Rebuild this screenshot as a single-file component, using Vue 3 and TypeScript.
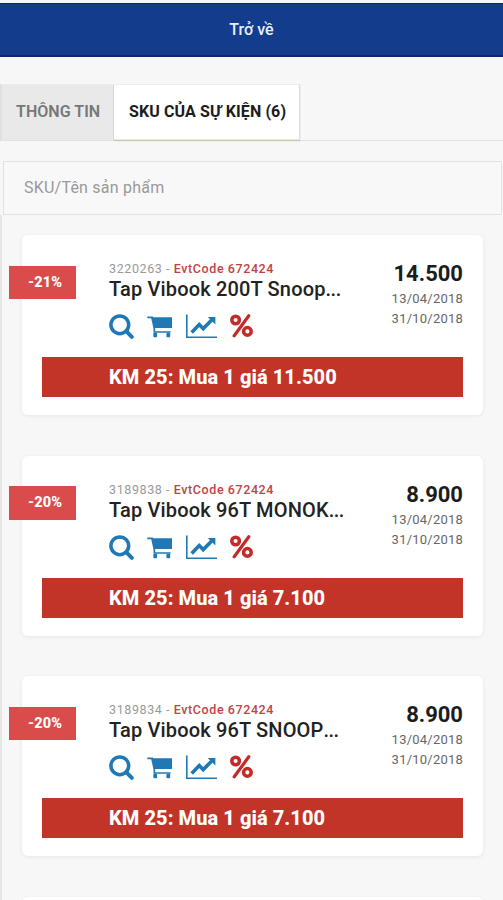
<script setup lang="ts">
interface Product {
  sku: string
  eventCode: string
  name: string
  discount: string
  price: string
  from: string
  to: string
  promo: string
}

const products: Product[] = [
  { sku: '3220263', eventCode: '672424', name: 'Tap Vibook 200T Snoop', discount: '-21%', price: '14.500', from: '13/04/2018', to: '31/10/2018', promo: 'KM 25: Mua 1 giá 11.500' },
  { sku: '3189838', eventCode: '672424', name: 'Tap Vibook 96T MONOK', discount: '-20%', price: '8.900', from: '13/04/2018', to: '31/10/2018', promo: 'KM 25: Mua 1 giá 7.100' },
  { sku: '3189834', eventCode: '672424', name: 'Tap Vibook 96T SNOOP', discount: '-20%', price: '8.900', from: '13/04/2018', to: '31/10/2018', promo: 'KM 25: Mua 1 giá 7.100' },
]
</script>

<template>
  <div class="screen">
    <header class="topbar">Trở về</header>
    <main class="content">
      <nav class="tabs">
        <div class="tab">THÔNG TIN</div>
        <div class="tab active">SKU CỦA SỰ KIỆN (6)</div>
      </nav>
      <input class="search" type="text" placeholder="SKU/Tên sản phẩm" />
      <section class="list">
        <article v-for="p in products" :key="p.sku" class="card">
          <span class="badge">{{ p.discount }}</span>
          <div class="row">
            <div class="info">
              <div class="code">{{ p.sku }} - <b>EvtCode {{ p.eventCode }}</b></div>
              <div class="name">{{ p.name }}<span class="dots">...</span></div>
              <div class="icons">
                <svg class="search-icon" viewBox="0 0 25 25" fill="none" stroke="#2079b5">
                  <circle cx="10.8" cy="10.8" r="8.9" stroke-width="3.5" />
                  <path d="M17.2 17.2L22.8 22.8" stroke-width="4" stroke-linecap="round" />
                </svg>
                <svg class="cart-icon" viewBox="0 0 26 22" fill="#2079b5">
                  <path d="M.3 .6H5.8L6.2 1.2H25V12H8.2V15.2H23.6V16.8H6.5V12.6L4.2 2.2H.3Z" />
                  <rect x="6.3" y="16.8" width="3.8" height="4.5" rx="1" />
                  <rect x="19.4" y="16.8" width="3.8" height="4.5" rx="1" />
                </svg>
                <svg class="chart-icon" viewBox="0 0 31 25">
                  <path d="M.8 .5V23.2H31" fill="none" stroke="#2079b5" stroke-width="1.6" />
                  <path d="M5.7 18.5L13.2 10.6L17.2 14.6L26 5.8" fill="none" stroke="#2079b5" stroke-width="3.6" />
                  <path d="M21.7 2.9H29.4V10.6Z" fill="#2079b5" />
                </svg>
                <svg class="percent-icon" viewBox="0 0 23 24" fill="none" stroke="#c42b28">
                  <circle cx="5.6" cy="6" r="3.8" stroke-width="3.5" />
                  <circle cx="17.4" cy="17.4" r="3.8" stroke-width="3.5" />
                  <path d="M18.8 1.8L4.2 21.8" stroke-width="3.2" stroke-linecap="round" />
                </svg>
              </div>
            </div>
            <div class="side">
              <div class="price">{{ p.price }}</div>
              <div class="date">{{ p.from }}</div>
              <div class="date">{{ p.to }}</div>
            </div>
          </div>
          <div class="promo">{{ p.promo }}</div>
        </article>
        <article class="card"></article>
      </section>
    </main>
  </div>
</template>

<style>
body {
  background: #f7f7f7;
  overflow: hidden;
}
</style>

<style scoped>
.screen {
  box-sizing: border-box;
  height: 900px;
  overflow: hidden;
  padding-top: 3px;
  background: #f7f7f7;
  font-family: Roboto, "Noto Sans", sans-serif;
}
.topbar {
  box-sizing: border-box;
  height: 54px;
  border-top: 1px solid #082774;
  border-bottom: 2px solid #082774;
  background: #143c8c;
  color: #e8effc;
  font-size: 16px;
  font-weight: 500;
  line-height: 51px;
  text-align: center;
}
.content {
  height: 843px;
  box-sizing: border-box;
  padding-top: 27px;
}
.tabs {
  display: flex;
  box-sizing: border-box;
  height: 57px;
  border-bottom: 1px solid #e2e2e2;
}
.tab {
  box-sizing: border-box;
  width: 114px;
  height: 56px;
  padding-left: 14px;
  border-right: 1px solid #dcdcdc;
  border-top: 1px solid #ececec;
  border-left: 2px solid #e0e0e0;
  background: #e9e9e9;
  color: #777;
  font-size: 16px;
  font-weight: 600;
  line-height: 54px;
  letter-spacing: 0.05px;
  white-space: nowrap;
}
.tab.active {
  width: 186px;
  padding-left: 15px;
  border-left: 0;
  background: #fff;
  color: #1c1c1c;
  font-weight: 700;
  letter-spacing: 0.12px;
  border-bottom: 1px solid #e7edc9;
  box-shadow: 0 1px 1px #c5c9b9;
}
.search {
  display: block;
  box-sizing: border-box;
  width: 499px;
  height: 54px;
  margin: 20px 0 0 3px;
  padding: 0 20px 2px;
  border: 1px solid #e2e2e2;
  border-radius: 0;
  background: #f8f8f8;
  font-family: inherit;
  font-size: 16px;
  letter-spacing: 0.22px;
  outline: none;
}
.search::placeholder {
  color: #999;
  opacity: 1;
}
.list {
  display: flex;
  flex-direction: column;
  gap: 40.7px;
  height: 686px;
  box-sizing: border-box;
  padding: 20px 20px 0 20px;
  border-left: 2px solid #e6e6e6;
}
.card {
  position: relative;
  flex: none;
  box-sizing: border-box;
  width: 461px;
  height: 180px;
  padding: 26px 20px 0;
  border-radius: 6px;
  background: #fff;
  box-shadow: 0 1px 4px rgba(0, 0, 0, 0.07);
}
.badge {
  position: absolute;
  left: -13px;
  top: 30.5px;
  box-sizing: border-box;
  width: 67px;
  height: 33.5px;
  padding-left: 19px;
  background: #da4c4c;
  color: #fff;
  font-size: 14.5px;
  font-weight: 800;
  line-height: 33px;
  letter-spacing: 0.15px;
}
.row {
  display: flex;
  justify-content: space-between;
  height: 96px;
  padding-left: 67px;
}
.code {
  height: 16px;
  color: #999;
  font-size: 12.5px;
  line-height: 16px;
  letter-spacing: 0.6px;
  white-space: nowrap;
}
.code b {
  color: #c04444;
  font-weight: 500;
  letter-spacing: 0.58px;
}
.name {
  height: 26px;
  color: #222;
  font-size: 20px;
  font-weight: 500;
  line-height: 25px;
  letter-spacing: 0.16px;
  white-space: nowrap;
}
.dots {
  display: inline-block;
  letter-spacing: -0.5px;
}
.icons {
  display: flex;
  align-items: flex-start;
  padding-top: 11px;
}
.icons svg {
  flex: none;
}
.search-icon {
  width: 25px;
  height: 25px;
}
.cart-icon {
  width: 26px;
  height: 22px;
  margin: 2px 0 0 13px;
}
.chart-icon {
  width: 31px;
  height: 25px;
  margin-left: 13px;
}
.percent-icon {
  width: 23px;
  height: 24px;
  margin-left: 13px;
}
.side {
  text-align: right;
}
.price {
  height: 28px;
  color: #1c1c1c;
  font-size: 22px;
  font-weight: 700;
  line-height: 26px;
}
.date {
  height: 20px;
  color: #666;
  font-size: 13px;
  line-height: 20px;
  letter-spacing: 0.22px;
}
.promo {
  box-sizing: border-box;
  height: 40px;
  padding-left: 67px;
  background: #c13427;
  color: #fff;
  font-size: 20px;
  font-weight: 800;
  line-height: 40px;
  letter-spacing: 0.07px;
  white-space: nowrap;
}
</style>
